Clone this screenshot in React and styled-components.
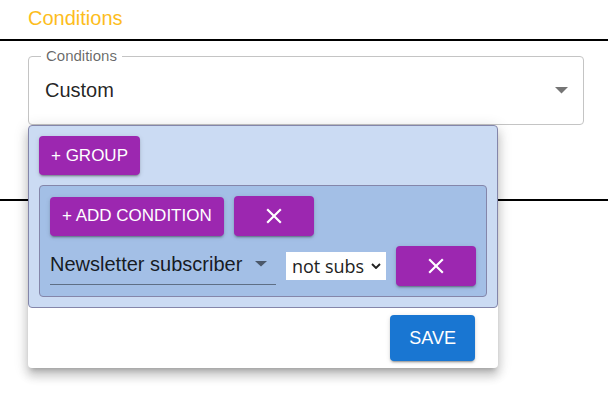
import React from 'react'
import styled, { createGlobalStyle } from 'styled-components'

const GlobalStyle = createGlobalStyle`
  html, body {
    margin: 0;
    padding: 0;
    background: #fff;
  }
  body {
    font-family: 'Liberation Sans', Arial, sans-serif;
    color: rgba(0, 0, 0, 0.87);
  }
  * {
    box-sizing: border-box;
  }
`

const CloseIcon = () => (
  <svg width="26" height="26" viewBox="0 0 24 24" fill="currentColor">
    <path d="M19 6.41 17.59 5 12 10.59 6.41 5 5 6.41 10.59 12 5 17.59 6.41 19 12 13.41 17.59 19 19 17.59 13.41 12z" />
  </svg>
)

const DropArrow = ({ w = 13, h = 6.5 }) => (
  <svg width={w} height={h} viewBox="0 0 10 5" preserveAspectRatio="none">
    <path d="M0 0 L5 5 L10 0 Z" fill="rgba(0,0,0,0.54)" />
  </svg>
)

const Chevron = () => (
  <svg width="10" height="6" viewBox="0 0 10 6">
    <path d="M1 1 L5 5 L9 1" fill="none" stroke="#222" strokeWidth="1.9" />
  </svg>
)

export default function App() {
  return (
    <Page>
      <GlobalStyle />
      <Title>Conditions</Title>

      <Section>
        <Field>
          <Legend>Conditions</Legend>
          <FieldValue>Custom</FieldValue>
          <DropArrow w={13} h={6.5} />
        </Field>
      </Section>

      <Popover>
        <Group>
          <div>
            <Button>+ Group</Button>
          </div>
          <Group inner>
            <Row>
              <Button>+ Add condition</Button>
              <IconButton>
                <CloseIcon />
              </IconButton>
            </Row>
            <Row>
              <StdSelect>
                <span>Newsletter subscriber</span>
                <DropArrow w={12} h={5.5} />
              </StdSelect>
              <NativeWrap>
                <NativeSelect defaultValue="not">
                  <option value="not">not subscribed</option>
                  <option value="yes">subscribed</option>
                </NativeSelect>
                <ChevronBox>
                  <Chevron />
                </ChevronBox>
              </NativeWrap>
              <IconButton>
                <CloseIcon />
              </IconButton>
            </Row>
          </Group>
        </Group>
        <Actions>
          <Button color="#1976d2" big>
            Save
          </Button>
        </Actions>
      </Popover>
    </Page>
  )
}

const Page = styled.div`
  position: relative;
  width: 608px;
  height: 402px;
  overflow: hidden;
`

const Title = styled.div`
  box-sizing: content-box;
  height: 39px;
  line-height: 36px;
  padding-left: 28px;
  border-bottom: 2px solid #000;
  font-size: 20px;
  color: #fdbd1c;
`

const Section = styled.div`
  box-sizing: content-box;
  height: 143px;
  padding: 15px 0 0 28px;
  border-bottom: 2px solid #000;
`

const Field = styled.div`
  position: relative;
  width: 556px;
  height: 69px;
  border: 1px solid #c4c4c4;
  border-radius: 4px;
  display: flex;
  align-items: center;
  padding: 0 15px 0 16px;
`

const Legend = styled.span`
  position: absolute;
  top: -10px;
  left: 12px;
  padding: 0 5px;
  background: #fff;
  font-size: 15px;
  line-height: 18px;
  color: rgba(0, 0, 0, 0.6);
`

const FieldValue = styled.span`
  flex: 1;
  font-size: 20px;
`

const Popover = styled.div`
  position: absolute;
  left: 28px;
  top: 125px;
  width: 470px;
  background: #fff;
  border-radius: 4px;
  box-shadow: 0px 5px 5px -3px rgba(0, 0, 0, 0.2),
    0px 8px 10px 1px rgba(0, 0, 0, 0.14), 0px 3px 14px 2px rgba(0, 0, 0, 0.12);
`

const Group = styled.div`
  display: flex;
  flex-direction: column;
  gap: 10px;
  padding: 10px;
  border: 1px solid #8486aa;
  border-radius: 4px;
  background: ${(p) => (p.inner ? '#a3bfe6' : '#cbdbf3')};
`

const Row = styled.div`
  display: flex;
  align-items: center;
  gap: 10px;
`

const Button = styled.button`
  height: ${(p) => (p.big ? '46px' : '39px')};
  padding: ${(p) => (p.big ? '0 19px' : '0 12px')};
  border: none;
  border-radius: 4px;
  background: ${(p) => p.color || '#9c27b0'};
  color: #fff;
  font-family: 'Liberation Sans', Arial, sans-serif;
  font-size: ${(p) => (p.big ? '18px' : '17px')};
  text-transform: uppercase;
  cursor: pointer;
  box-shadow: 0px 3px 1px -2px rgba(0, 0, 0, 0.2),
    0px 2px 2px 0px rgba(0, 0, 0, 0.14), 0px 1px 5px 0px rgba(0, 0, 0, 0.12);
`

const IconButton = styled(Button)`
  width: 80px;
  height: 40px;
  padding: 0;
  display: flex;
  align-items: center;
  justify-content: center;
`

const StdSelect = styled.div`
  width: 226px;
  display: flex;
  align-items: center;
  padding: 5px 9px 8px 0;
  border-bottom: 1px solid rgba(0, 0, 0, 0.42);
  font-size: 20px;
  line-height: 23px;

  span {
    flex: 1;
  }
`

const NativeWrap = styled.div`
  position: relative;
  width: 100px;
  height: 28px;
`

const NativeSelect = styled.select`
  appearance: none;
  width: 100%;
  height: 100%;
  padding: 0 21px 0 6px;
  border: none;
  border-radius: 0;
  background: #fff;
  color: #222;
  font-family: 'Open Sans', 'Noto Sans', sans-serif;
  font-size: 18px;
  outline: none;
`

const ChevronBox = styled.span`
  position: absolute;
  right: 5px;
  top: 11px;
  display: flex;
  pointer-events: none;
`

const Actions = styled.div`
  display: flex;
  justify-content: flex-end;
  padding: 7px 23px 7px 0;
`
